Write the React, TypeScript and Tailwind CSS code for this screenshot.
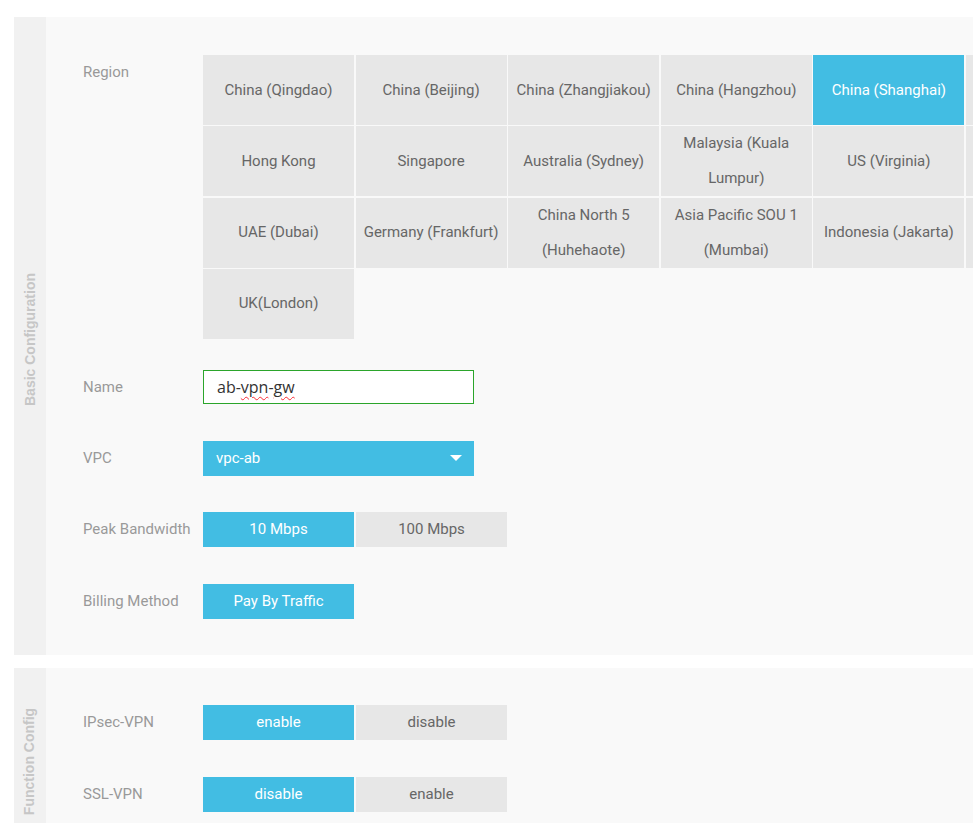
import { ReactNode } from 'react';

// the sixth column runs past the window edge; its labels are never visible
const regions = [
  'China (Qingdao)',
  'China (Beijing)',
  'China (Zhangjiakou)',
  'China (Hangzhou)',
  'China (Shanghai)',
  '',
  'Hong Kong',
  'Singapore',
  'Australia (Sydney)',
  'Malaysia (Kuala Lumpur)',
  'US (Virginia)',
  '',
  'UAE (Dubai)',
  'Germany (Frankfurt)',
  'China North 5 (Huhehaote)',
  'Asia Pacific SOU 1 (Mumbai)',
  'Indonesia (Jakarta)',
  '',
  'UK(London)',
];

const selectedRegion = 'China (Shanghai)';

function Row({ label, children, className = '' }: { label: string; children: ReactNode; className?: string }) {
  return (
    <div className={`flex ${className}`}>
      <div className="w-[120px] shrink-0 leading-[35px] text-[15px] text-[#999]">{label}</div>
      <div className="flex-1">{children}</div>
    </div>
  );
}

function Toggle({ options, active }: { options: string[]; active: number }) {
  return (
    <div className="flex gap-[2px]">
      {options.map((opt, i) => (
        <div
          key={opt}
          className={`w-[151px] h-[35px] flex items-center justify-center text-[15px] ${
            i === active ? 'bg-[#42bde3] text-white' : 'bg-[#e7e7e7] text-[#666]'
          }`}
        >
          {opt}
        </div>
      ))}
    </div>
  );
}

function Section({ title, children, className = '' }: { title: string; children: ReactNode; className?: string }) {
  return (
    <div className={`flex w-[1200px] ${className}`}>
      <div className="w-[32px] shrink-0 bg-[#f1f1f1] flex items-center justify-center pt-[7px]">
        <div
          className="-rotate-90 whitespace-nowrap text-[14px] font-bold text-[#c6c6c6]"
          style={{ fontFamily: '"Liberation Sans", Arial, sans-serif' }}
        >
          {title}
        </div>
      </div>
      <div className="flex-1 bg-[#f9f9f9] pl-[37px]">{children}</div>
    </div>
  );
}

export default function App() {
  return (
    <div
      className="w-[973px] h-[823px] overflow-hidden bg-white pt-[17px] pl-[14px]"
      style={{ fontFamily: 'Roboto, "Noto Sans", sans-serif' }}
    >
      <Section title="Basic Configuration">
        <div className="pt-[38px] pb-[36px]">
          <Row label="Region">
            <div className="grid grid-cols-[repeat(6,151px)] auto-rows-[70px] gap-x-[1.6px] gap-y-[1.33px]">
              {regions.map((r, i) => (
                <div
                  key={i}
                  className={`flex items-center justify-center text-center px-2 text-[15px] leading-[35px] ${
                    r === selectedRegion ? 'bg-[#42bde3] text-white' : 'bg-[#e7e7e7] text-[#666]'
                  }`}
                >
                  {r}
                </div>
              ))}
            </div>
          </Row>

          <Row label="Name" className="mt-[31px]">
            <div
              className="w-[271px] h-[34px] border border-[#2ba52b] bg-white flex items-center pl-[13px] text-[16px] text-[#333]"
              style={{ fontFamily: '"Open Sans", sans-serif' }}
            >
              ab-
              <span className="underline decoration-wavy decoration-red-500 decoration-1 underline-offset-[3px]">vpn</span>
              -
              <span className="underline decoration-wavy decoration-red-500 decoration-1 underline-offset-[3px]">gw</span>
            </div>
          </Row>

          <Row label="VPC" className="mt-[36px]">
            <div className="w-[271px] h-[35px] bg-[#42bde3] flex items-center justify-between pl-[13px] pr-[12px] text-[15px] text-white">
              <span>vpc-ab</span>
              <svg width="12" height="6" viewBox="0 0 12 6">
                <path d="M0 0h12L6 6z" fill="#fff" />
              </svg>
            </div>
          </Row>

          <Row label="Peak Bandwidth" className="mt-[36px]">
            <Toggle options={['10 Mbps', '100 Mbps']} active={0} />
          </Row>

          <Row label="Billing Method" className="mt-[37px]">
            <Toggle options={['Pay By Traffic']} active={0} />
          </Row>
        </div>
      </Section>

      <Section title="Function Config" className="mt-[13px]">
        <div className="pt-[37px] pb-[36px]">
          <Row label="IPsec-VPN">
            <Toggle options={['enable', 'disable']} active={0} />
          </Row>
          <Row label="SSL-VPN" className="mt-[37px]">
            <Toggle options={['disable', 'enable']} active={0} />
          </Row>
        </div>
      </Section>
    </div>
  );
}
